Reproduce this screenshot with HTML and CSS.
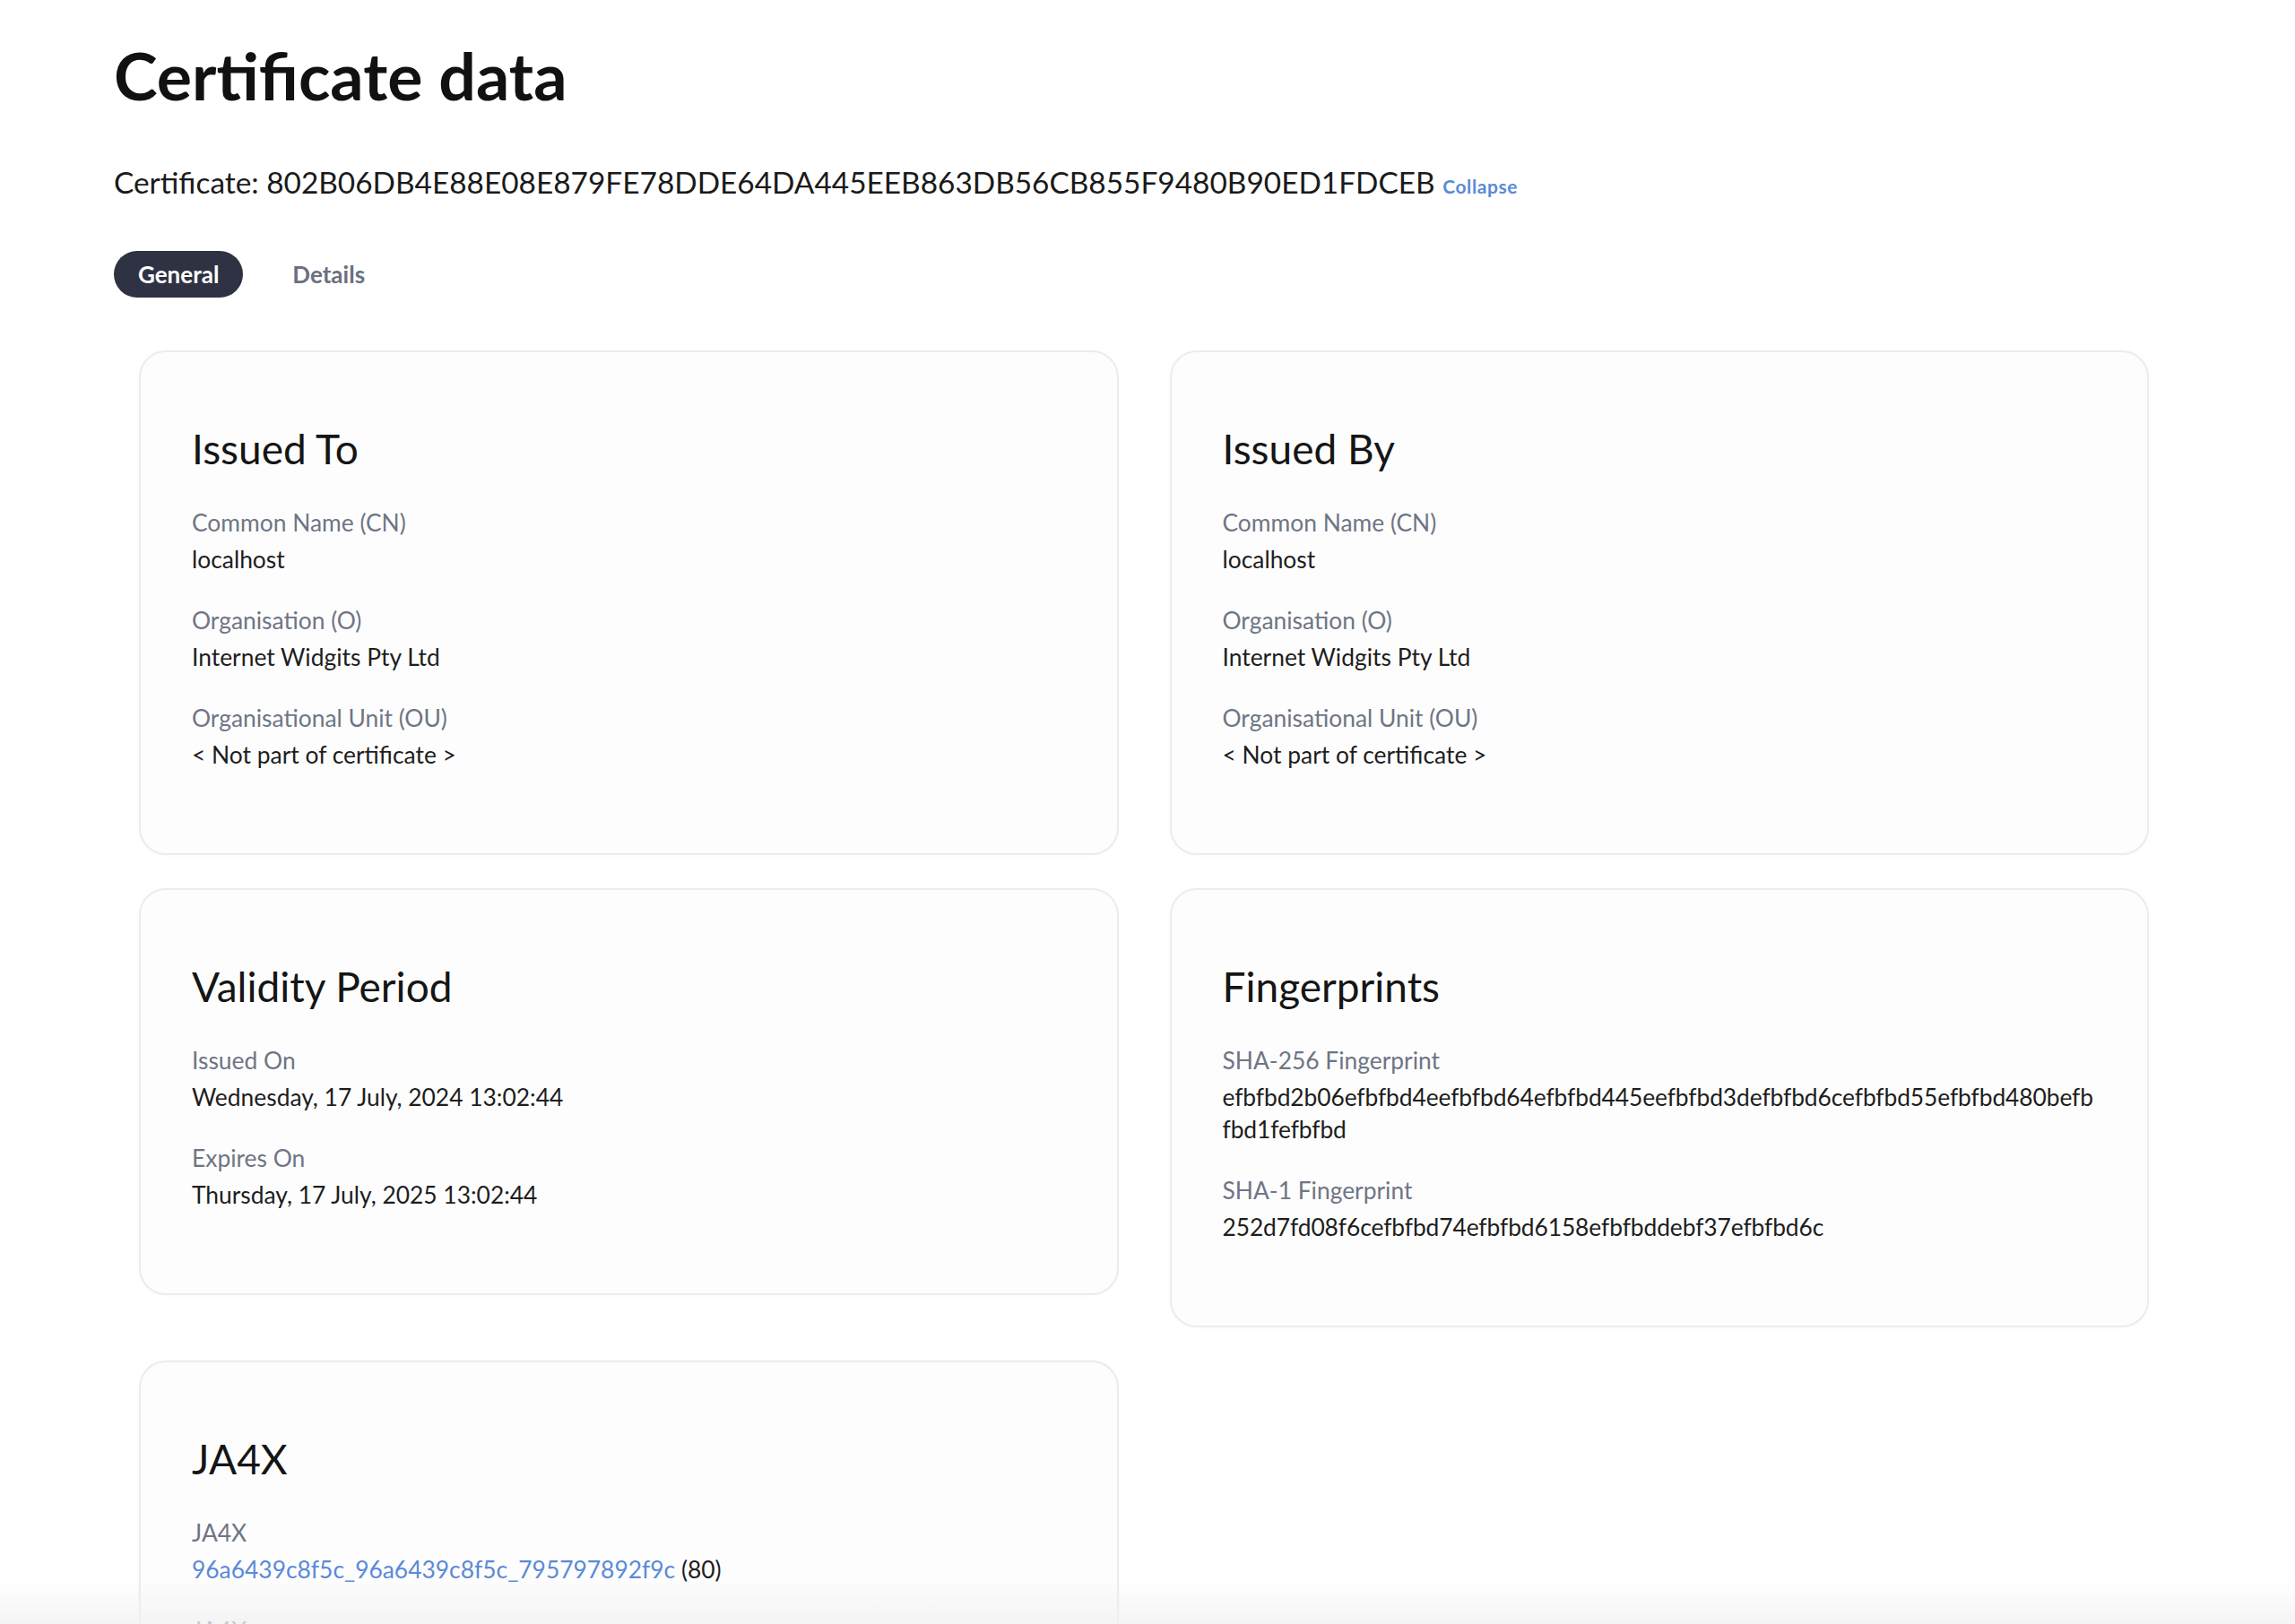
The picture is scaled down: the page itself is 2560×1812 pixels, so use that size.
FILE: index.html
```html
<!DOCTYPE html>
<html lang="en">
<head>
<meta charset="utf-8">
<title>Certificate data</title>
<link rel="stylesheet" href="styles.css">
</head>
<body>
<main class="page">
  <h1 class="page-title">Certificate data</h1>
  <p class="cert-line">Certificate: 802B06DB4E88E08E879FE78DDE64DA445EEB863DB56CB855F9480B90ED1FDCEB <a class="collapse" href="#">Collapse</a></p>
  <nav class="tabs">
    <span class="tab tab-active">General</span>
    <span class="tab">Details</span>
  </nav>
  <section class="grid">
    <div class="card">
      <h2 class="card-title">Issued To</h2>
      <div class="field"><div class="label">Common Name (CN)</div><div class="value">localhost</div></div>
      <div class="field"><div class="label">Organisation (O)</div><div class="value">Internet Widgits Pty Ltd</div></div>
      <div class="field"><div class="label">Organisational Unit (OU)</div><div class="value">&lt; Not part of certificate &gt;</div></div>
    </div>
    <div class="card">
      <h2 class="card-title">Issued By</h2>
      <div class="field"><div class="label">Common Name (CN)</div><div class="value">localhost</div></div>
      <div class="field"><div class="label">Organisation (O)</div><div class="value">Internet Widgits Pty Ltd</div></div>
      <div class="field"><div class="label">Organisational Unit (OU)</div><div class="value">&lt; Not part of certificate &gt;</div></div>
    </div>
    <div class="card">
      <h2 class="card-title">Validity Period</h2>
      <div class="field"><div class="label">Issued On</div><div class="value">Wednesday, 17 July, 2024 13:02:44</div></div>
      <div class="field"><div class="label">Expires On</div><div class="value">Thursday, 17 July, 2025 13:02:44</div></div>
    </div>
    <div class="card">
      <h2 class="card-title">Fingerprints</h2>
      <div class="field"><div class="label">SHA-256 Fingerprint</div><div class="value hash">efbfbd2b06efbfbd4eefbfbd64efbfbd445eefbfbd3defbfbd6cefbfbd55efbfbd480befbfbd1fefbfbd</div></div>
      <div class="field"><div class="label">SHA-1 Fingerprint</div><div class="value hash">252d7fd08f6cefbfbd74efbfbd6158efbfbddebf37efbfbd6c</div></div>
    </div>
    <div class="card">
      <h2 class="card-title">JA4X</h2>
      <div class="field"><div class="label">JA4X</div><div class="value"><a class="link" href="#">96a6439c8f5c_96a6439c8f5c_795797892f9c</a> (80)</div></div>
      <div class="field"><div class="label">JA4X_r</div><div class="value">96a6439c8f5c</div></div>
    </div>
  </section>
</main>
<div class="fade"></div>
</body>
</html>
```
FILE: styles.css
```css
html, body {
  margin: 0;
  padding: 0;
  background: #ffffff;
}
body {
  font-family: "Lato", "Noto Sans", sans-serif;
  color: #1c1c1c;
}
.page {
  padding: 38px 127px 0 127px;
}
.page-title {
  margin: 0;
  font-size: 73.5px;
  line-height: 92px;
  font-weight: 700;
  color: #111111;
}
.cert-line {
  margin: 51px 0 0 0;
  font-size: 33.4px;
  line-height: 44px;
  color: #1a1a1a;
}
.collapse {
  font-size: 21px;
  font-weight: 700;
  letter-spacing: 0.6px;
  color: #5a8ad8;
  text-decoration: none;
}
.tabs {
  display: flex;
  gap: 28px;
  margin-top: 50px;
}
.tab {
  display: inline-flex;
  align-items: center;
  height: 52px;
  padding: 0 27px;
  border-radius: 26px;
  font-size: 26px;
  font-weight: 700;
  color: #6b7080;
}
.tab-active {
  background: #2e3242;
  color: #ffffff;
}
.grid {
  display: grid;
  grid-template-columns: 1fr 1fr;
  column-gap: 57px;
  row-gap: 37px;
  align-items: start;
  margin: 59px 36px 0 28px;
}
.card {
  border: 2px solid #ececec;
  border-radius: 30px;
  background: #fdfdfd;
  padding: 57px 57px 60px 57px;
  box-shadow: 0 1px 4px rgba(0, 0, 0, 0.02);
}
.card-title {
  margin: 20px 0 33px 0;
  font-size: 46px;
  line-height: 62px;
  font-weight: 400;
  color: #151515;
}
.field {
  margin-bottom: 32px;
}
.label {
  font-size: 26.4px;
  line-height: 36px;
  color: #6e7585;
  margin-bottom: 5px;
}
.value {
  font-size: 26.4px;
  line-height: 36px;
  color: #1e1e1e;
}
.hash {
  word-break: break-all;
  letter-spacing: -0.1px;
}
.link {
  color: #5a8ad8;
  text-decoration: none;
}
.fade {
  position: fixed;
  left: 0;
  right: 0;
  bottom: 0;
  height: 50px;
  background: linear-gradient(to bottom, rgba(245, 245, 245, 0), rgba(240, 240, 240, 0.7));
  pointer-events: none;
}
```
